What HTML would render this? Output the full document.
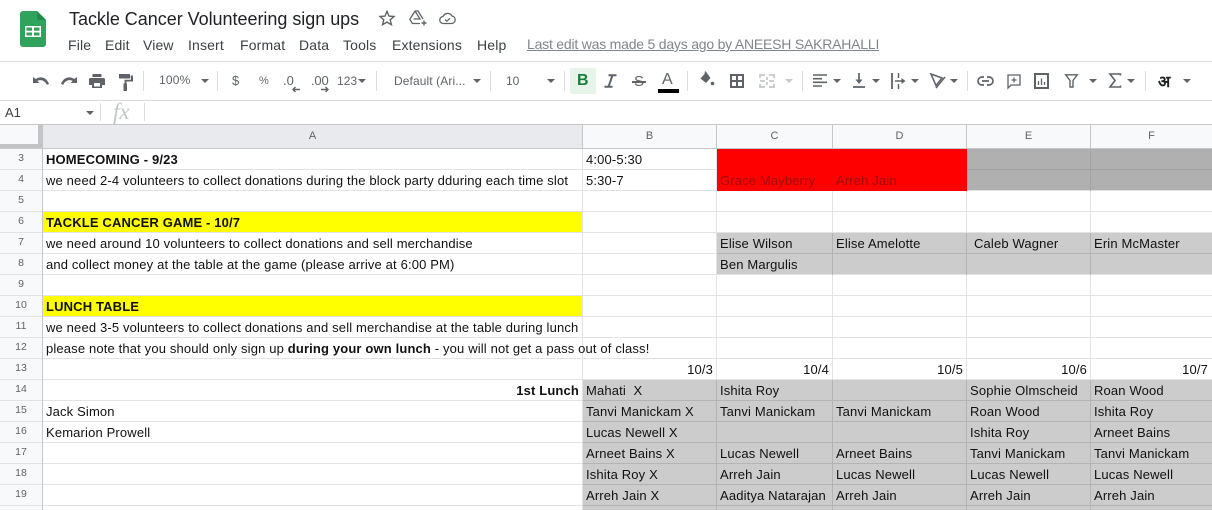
<!DOCTYPE html>
<html><head><meta charset="utf-8">
<style>
*{box-sizing:border-box}
html,body{margin:0;padding:0;background:#fff}
body{width:1212px;height:510px;overflow:hidden;position:relative;font-family:"Liberation Sans",Arial,sans-serif;color:#202124}
.a{position:absolute;white-space:nowrap}
.m{position:absolute;top:37px;font-size:14px;line-height:17px;color:#3c4043;letter-spacing:.15px}
.t{position:absolute;font-size:12px;line-height:14px;color:#5f6368;white-space:nowrap}
.dd{position:absolute;width:0;height:0;border-left:4px solid transparent;border-right:4px solid transparent;border-top:4px solid #5f6368}
.sep{position:absolute;top:71px;width:1px;height:20px;background:#dadce0}
.c{position:absolute;height:21px;line-height:21px;font-size:13px;color:#111;white-space:nowrap;overflow:visible;padding-left:3px;letter-spacing:.15px}
.r{padding:0 3px 0 0;text-align:right}
.fill{position:absolute}
.vl{position:absolute;width:1px;background:#e2e3e3;top:149px;height:361px}
.hl{position:absolute;height:1px;left:0;width:1212px;background:#e2e3e3}
.rn{position:absolute;left:0;width:42px;text-align:center;font-size:10.5px;line-height:21px;color:#5f6368}
.ch{position:absolute;top:125px;height:23px;background:#f8f9fa;border-right:1px solid #c7c7c7;text-align:center;font-size:11px;line-height:23px;color:#5f6368}
svg{position:absolute;overflow:visible}
</style></head><body>

<svg style="left:20px;top:11px" width="26" height="36" viewBox="0 0 26 36">
<path d="M3 0H17L26 9V33a3 3 0 0 1-3 3H3a3 3 0 0 1-3-3V3a3 3 0 0 1 3-3z" fill="#2fa35b"/>
<path d="M17 0L26 9H19a2 2 0 0 1-2-2z" fill="#1f8a4a"/>
<path d="M5 15H21V26H5zM6.500 16.500v3.200h5.500v-3.200zM14 16.500v3.200h5.500v-3.200zM6.500 21.500v3h5.500v-3zM14 21.500v3h5.500v-3z" fill="#fff" fill-rule="evenodd"/>
</svg>

<div class="a" style="left:69px;top:8px;font-size:18px;line-height:22px;color:#202124;letter-spacing:-.03px">Tackle Cancer Volunteering sign ups</div>
<svg style="left:379px;top:10px" width="16" height="16" viewBox="0 0 16 16"><path d="M8 1.500l2 4.600 5 .4-3.800 3.300 1.200 4.900L8 12.100l-4.400 2.600 1.200-4.900L1 6.500l5-.4z" fill="none" stroke="#5f6368" stroke-width="1.400"/></svg>
<svg style="left:409px;top:10px" width="19" height="16" viewBox="0 0 19 16"><path d="M6 1h3l5 8M6 1L.8 9.500 3.500 13.500H11M6 1l5 8H4.500" fill="none" stroke="#5f6368" stroke-width="1.300"/><path d="M15 10.500v5M12.500 13h5" stroke="#5f6368" stroke-width="1.400"/></svg>
<svg style="left:439px;top:12px" width="17" height="13" viewBox="0 0 17 13"><path d="M4.500 11.500a3.500 3.500 0 0 1-.5-7A5 5 0 0 1 13 4a3.800 3.800 0 0 1 0 7.500z" fill="none" stroke="#5f6368" stroke-width="1.300"/><path d="M6 7.500l2 1.700 3-3" fill="none" stroke="#5f6368" stroke-width="1.200"/></svg>

<div class="m" style="left:68px">File</div>
<div class="m" style="left:105px">Edit</div>
<div class="m" style="left:143px">View</div>
<div class="m" style="left:188px">Insert</div>
<div class="m" style="left:240px">Format</div>
<div class="m" style="left:299px">Data</div>
<div class="m" style="left:343px">Tools</div>
<div class="m" style="left:392px">Extensions</div>
<div class="m" style="left:477px">Help</div>
<div class="a" style="left:527px;top:36px;font-size:14px;line-height:17px;color:#80868b;text-decoration:underline;letter-spacing:-.21px">Last edit was made 5 days ago by ANEESH SAKRAHALLI</div>

<div class="fill" style="left:0;top:61px;width:1212px;height:1px;background:#dadce0"></div>
<div class="fill" style="left:0;top:100px;width:1212px;height:1px;background:#dadce0"></div>

<!-- toolbar -->
<svg style="left:33px;top:76px" width="16" height="10" viewBox="0 0 16 10"><path d="M0 1v6h6.500L4.300 5C7 3.300 11.500 3.800 13.800 8.800L16 8C13.800 1.500 7.500-.2 2.800 3z" fill="#5f6368"/></svg>
<svg style="left:61px;top:76px" width="16" height="10" viewBox="0 0 16 10"><path d="M16 1v6H9.500L11.700 5C9 3.300 4.500 3.800 2.200 8.800L0 8C2.200 1.500 8.500-.2 13.200 3z" fill="#5f6368"/></svg>
<svg style="left:89px;top:74px" width="16" height="14" viewBox="0 0 16 14"><path d="M3.500 0h9v3h-9zM1.500 4h13a1.500 1.500 0 0 1 1.500 1.500V11h-3v3H3v-3H0V5.500A1.500 1.500 0 0 1 1.500 4zM5 9v3.500h6V9z" fill="#5f6368" fill-rule="evenodd"/></svg>
<svg style="left:119px;top:74px" width="14" height="17" viewBox="0 0 14 17"><path d="M0 0h11v4.500H0zM11.500 1.500H14V7.500H7.500V9.500H8V17H4.500V9.500H5.500V5.800h6.500z" fill="#5f6368"/></svg>
<div class="sep" style="left:143px"></div>
<div class="t" style="left:159px;top:73px;letter-spacing:.2px">100%</div><div class="dd" style="left:201px;top:79px"></div>
<div class="sep" style="left:217px"></div>
<div class="t" style="left:232px;top:74px;font-size:13px">$</div>
<div class="t" style="left:259px;top:74px;font-size:11px">%</div>
<div class="t" style="left:283px;top:74px;font-size:13px">.0</div>
<svg style="left:292px;top:87px" width="8" height="5" viewBox="0 0 8 5"><path d="M8 2.500H2M3.500 0L1 2.500 3.500 5" fill="none" stroke="#5f6368" stroke-width="1.400"/></svg>
<div class="t" style="left:311px;top:74px;font-size:13px;letter-spacing:-.2px">.00</div>
<svg style="left:321px;top:87px" width="8" height="5" viewBox="0 0 8 5"><path d="M0 2.500H6M4.500 0L7 2.500 4.500 5" fill="none" stroke="#5f6368" stroke-width="1.400"/></svg>
<div class="t" style="left:337px;top:74px;letter-spacing:.1px">123</div><div class="dd" style="left:358px;top:79px"></div>
<div class="sep" style="left:376px"></div>
<div class="t" style="left:394px;top:74px;letter-spacing:.1px">Default (Ari...</div><div class="dd" style="left:473px;top:79px"></div>
<div class="sep" style="left:490px"></div>
<div class="t" style="left:506px;top:74px">10</div><div class="dd" style="left:547px;top:79px"></div>
<div class="sep" style="left:564px"></div>
<div class="fill" style="left:570px;top:68px;width:26px;height:26px;background:#e6f4ea;border-radius:2px"></div>
<div class="a" style="left:577px;top:72px;font-size:16px;line-height:18px;font-weight:bold;color:#188038">B</div>
<svg style="left:604px;top:74px" width="13" height="14" viewBox="0 0 13 14"><path d="M4.500 1.200H12.500M.5 12.800H8.500M8.500 1.200L4.500 12.800" fill="none" stroke="#5f6368" stroke-width="2"/></svg>
<div class="a" style="left:634px;top:73px;font-size:15px;line-height:17px;color:#5f6368">S</div>
<div class="fill" style="left:632px;top:81px;width:14px;height:1.500px;background:#5f6368"></div>
<div class="a" style="left:662px;top:71px;font-size:16px;line-height:18px;color:#5f6368">A</div>
<div class="fill" style="left:658px;top:89px;width:21px;height:4px;background:#000"></div>
<div class="sep" style="left:687px"></div>
<svg style="left:700px;top:71px" width="15" height="15" viewBox="0 0 15 15"><path d="M5 0l1.200 1L10.500 7 6 12 .5 7.500 4.500 3z" fill="#5f6368"/><circle cx="12.500" cy="12.500" r="1.800" fill="#5f6368"/></svg>
<svg style="left:730px;top:74px" width="14" height="14" viewBox="0 0 14 14"><path d="M1 1h12v12H1zM7 1v12M1 7h12" fill="none" stroke="#5f6368" stroke-width="2"/></svg>
<svg style="left:759px;top:74px" width="16" height="14" viewBox="0 0 16 14"><path d="M1 4V1h5M10 1h5v3M15 10v3h-5M6 13H1v-3M1 7h5M10 7h5M8 3v3M8 8v3" fill="none" stroke="#c6c8ca" stroke-width="1.800"/></svg>
<div class="dd" style="left:785px;top:79px;border-top-color:#c6c8ca"></div>
<div class="sep" style="left:802px"></div>
<svg style="left:813px;top:74px" width="14" height="13" viewBox="0 0 14 13"><path d="M0 1h14M0 4.700h9M0 8.300h14M0 12h9" stroke="#5f6368" stroke-width="1.600"/></svg>
<div class="dd" style="left:833px;top:79px"></div>
<svg style="left:853px;top:73px" width="12" height="15" viewBox="0 0 12 15"><path d="M0 14h12M6 0v8" fill="none" stroke="#5f6368" stroke-width="1.700"/><path d="M2.500 6.500h7L6 11z" fill="#5f6368"/></svg>
<div class="dd" style="left:872px;top:79px"></div>
<svg style="left:891px;top:73px" width="15" height="16" viewBox="0 0 15 16"><path d="M1 0v16" stroke="#5f6368" stroke-width="1.800"/><path d="M7.500 0v5M7.500 11v5M4 8h8" fill="none" stroke="#5f6368" stroke-width="1.500"/><path d="M10.500 5L14.500 8l-4 3z" fill="#5f6368"/></svg>
<div class="dd" style="left:911px;top:79px"></div>
<svg style="left:930px;top:73px" width="16" height="16" viewBox="0 0 16 16"><path d="M1 1l11 4-6 7.500z" fill="none" stroke="#5f6368" stroke-width="1.500"/><path d="M15 4L6 15" fill="none" stroke="#5f6368" stroke-width="1.500"/></svg>
<div class="dd" style="left:950px;top:79px"></div>
<div class="sep" style="left:967px"></div>
<svg style="left:977px;top:76px" width="17" height="10" viewBox="0 0 17 10"><path d="M7 1H5a4 4 0 0 0 0 8h2M10 1h2a4 4 0 0 1 0 8h-2M5 5h7" fill="none" stroke="#5f6368" stroke-width="1.700"/></svg>
<svg style="left:1007px;top:74px" width="14" height="15" viewBox="0 0 14 15"><path d="M1 1h12v10H4l-3 3zM7 3.500v5M4.500 6h5" fill="none" stroke="#5f6368" stroke-width="1.300"/></svg>
<svg style="left:1034px;top:73px" width="15" height="16" viewBox="0 0 15 16"><path d="M1 1h13v14H1z" fill="none" stroke="#5f6368" stroke-width="2"/><path d="M4.500 8v4M7.500 5.500V12M10.500 9v3" stroke="#5f6368" stroke-width="1.300"/></svg>
<svg style="left:1065px;top:74px" width="13" height="14" viewBox="0 0 13 14"><path d="M.7.800h11.600L8 6.500V13H5V6.500z" fill="none" stroke="#5f6368" stroke-width="1.400"/></svg>
<div class="dd" style="left:1089px;top:79px"></div>
<svg style="left:1109px;top:73px" width="12" height="15" viewBox="0 0 12 15"><path d="M11.500 2.500V1H1l5 6.500L1 14h10.500v-1.500" fill="none" stroke="#5f6368" stroke-width="1.600"/></svg>
<div class="dd" style="left:1127px;top:79px"></div>
<div class="sep" style="left:1145px"></div>
<div class="a" style="left:1158px;top:72px;font-family:'DejaVu Sans',sans-serif;font-size:16px;line-height:19px;font-weight:bold;color:#202124">अ</div>
<div class="dd" style="left:1183px;top:79px"></div>

<!-- formula bar -->
<div class="a" style="left:5px;top:105px;font-size:13px;line-height:15px;color:#3c4043">A1</div>
<div class="dd" style="left:86px;top:111px"></div>
<div class="fill" style="left:100px;top:103px;width:1px;height:18px;background:#dadce0"></div>
<div class="a" style="left:113px;top:100px;font-family:'Liberation Serif',serif;font-style:italic;font-size:23px;line-height:24px;color:#c4c7c9">fx</div>
<div class="fill" style="left:144px;top:103px;width:1px;height:18px;background:#dadce0"></div>
<div class="fill" style="left:0;top:124px;width:1212px;height:1px;background:#c7c7c7"></div>

<!-- headers -->
<div class="fill" style="left:0;top:125px;width:43px;height:385px;background:#f8f9fa"></div>
<div class="fill" style="left:0;top:144px;width:43px;height:4px;background:#c3c4c6"></div>
<div class="fill" style="left:38px;top:125px;width:5px;height:23px;background:#c3c4c6"></div>
<div class="ch" style="left:43px;width:540px;background:#e8eaed">A</div>
<div class="ch" style="left:583px;width:134px">B</div>
<div class="ch" style="left:717px;width:116px">C</div>
<div class="ch" style="left:833px;width:134px">D</div>
<div class="ch" style="left:967px;width:124px">E</div>
<div class="ch" style="left:1091px;width:121px;border-right:0">F</div>

<!-- fills -->
<div class="fill" style="left:967px;top:149px;width:245px;height:42px;background:#b0b0b0"></div>
<div class="fill" style="left:43px;top:212px;width:540px;height:21px;background:#ffff00"></div>
<div class="fill" style="left:43px;top:296px;width:540px;height:21px;background:#ffff00"></div>
<div class="fill" style="left:717px;top:233px;width:495px;height:42px;background:#cccccc"></div>
<div class="fill" style="left:583px;top:380px;width:629px;height:130px;background:#cccccc"></div>

<!-- grid -->
<div class="hl" style="top:148px;background:#c7c7c7"></div>
<div class="hl" style="top:169px"></div><div class="hl" style="top:190px"></div><div class="hl" style="top:211px"></div><div class="hl" style="top:232px"></div><div class="hl" style="top:253px"></div><div class="hl" style="top:274px"></div><div class="hl" style="top:295px"></div><div class="hl" style="top:316px"></div><div class="hl" style="top:337px"></div><div class="hl" style="top:358px"></div><div class="hl" style="top:379px"></div><div class="hl" style="top:400px"></div><div class="hl" style="top:421px"></div><div class="hl" style="top:442px"></div><div class="hl" style="top:463px"></div><div class="hl" style="top:484px"></div><div class="hl" style="top:505px"></div>
<div class="vl" style="left:42px;background:#c7c7c7"></div>
<div class="vl" style="left:582px"></div><div class="vl" style="left:716px"></div><div class="vl" style="left:832px"></div><div class="vl" style="left:966px"></div><div class="vl" style="left:1090px"></div>

<!-- yellow and red sit over grid lines -->
<div class="fill" style="left:43px;top:212px;width:539px;height:20px;background:#ffff00"></div>
<div class="fill" style="left:43px;top:296px;width:539px;height:20px;background:#ffff00"></div>
<div class="fill" style="left:717px;top:149px;width:250px;height:42px;background:#ff0000"></div>

<!-- darker lines over grey -->
<div class="fill" style="left:583px;top:400px;width:629px;height:1px;background:#b4b4b4"></div>
<div class="fill" style="left:583px;top:421px;width:629px;height:1px;background:#b4b4b4"></div>
<div class="fill" style="left:583px;top:442px;width:629px;height:1px;background:#b4b4b4"></div>
<div class="fill" style="left:583px;top:463px;width:629px;height:1px;background:#b4b4b4"></div>
<div class="fill" style="left:583px;top:484px;width:629px;height:1px;background:#b4b4b4"></div>
<div class="fill" style="left:583px;top:505px;width:629px;height:1px;background:#b4b4b4"></div>
<div class="fill" style="left:716px;top:380px;width:1px;height:130px;background:#b4b4b4"></div>
<div class="fill" style="left:832px;top:380px;width:1px;height:130px;background:#b4b4b4"></div>
<div class="fill" style="left:966px;top:380px;width:1px;height:130px;background:#b4b4b4"></div>
<div class="fill" style="left:1090px;top:380px;width:1px;height:130px;background:#b4b4b4"></div>
<div class="fill" style="left:717px;top:253px;width:495px;height:1px;background:#b4b4b4"></div>
<div class="fill" style="left:832px;top:233px;width:1px;height:42px;background:#b4b4b4"></div>
<div class="fill" style="left:966px;top:233px;width:1px;height:42px;background:#b4b4b4"></div>
<div class="fill" style="left:1090px;top:233px;width:1px;height:42px;background:#b4b4b4"></div>
<div class="fill" style="left:967px;top:169px;width:245px;height:1px;background:#a2a2a2"></div>
<div class="fill" style="left:1090px;top:149px;width:1px;height:42px;background:#a2a2a2"></div>

<!-- row numbers -->
<div class="rn" style="top:148px">3</div><div class="rn" style="top:169px">4</div><div class="rn" style="top:190px">5</div><div class="rn" style="top:211px">6</div><div class="rn" style="top:232px">7</div><div class="rn" style="top:253px">8</div><div class="rn" style="top:274px">9</div><div class="rn" style="top:295px">10</div><div class="rn" style="top:316px">11</div><div class="rn" style="top:337px">12</div><div class="rn" style="top:358px">13</div><div class="rn" style="top:379px">14</div><div class="rn" style="top:400px">15</div><div class="rn" style="top:421px">16</div><div class="rn" style="top:442px">17</div><div class="rn" style="top:463px">18</div><div class="rn" style="top:484px">19</div>

<!-- cells -->
<div class="c" style="left:43px;top:149px"><b>HOMECOMING - 9/23</b></div>
<div class="c" style="left:583px;top:149px">4:00-5:30</div>
<div class="c" style="left:43px;top:170px">we need 2-4 volunteers to collect donations during the block party dduring each time slot</div>
<div class="c" style="left:583px;top:170px">5:30-7</div>
<div class="c" style="left:717px;top:170px;color:#a10b0b">Grace Mayberry</div>
<div class="c" style="left:833px;top:170px;color:#a10b0b">Arreh Jain</div>
<div class="c" style="left:43px;top:212px"><b>TACKLE CANCER GAME - 10/7</b></div>
<div class="c" style="left:43px;top:233px">we need around 10 volunteers to collect donations and sell merchandise</div>
<div class="c" style="left:717px;top:233px">Elise Wilson</div>
<div class="c" style="left:833px;top:233px">Elise Amelotte</div>
<div class="c" style="left:971px;top:233px">Caleb Wagner</div>
<div class="c" style="left:1091px;top:233px">Erin McMaster</div>
<div class="c" style="left:43px;top:254px">and collect money at the table at the game (please arrive at 6:00 PM)</div>
<div class="c" style="left:717px;top:254px">Ben Margulis</div>
<div class="c" style="left:43px;top:296px"><b>LUNCH TABLE</b></div>
<div class="c" style="left:43px;top:317px">we need 3-5 volunteers to collect donations and sell merchandise at the table during lunch</div>
<div class="c" style="left:43px;top:338px">please note that you should only sign up <b>during your own lunch</b> - you will not get a pass out of class!</div>
<div class="c r" style="left:583px;width:133px;top:359px">10/3</div>
<div class="c r" style="left:717px;width:115px;top:359px">10/4</div>
<div class="c r" style="left:833px;width:133px;top:359px">10/5</div>
<div class="c r" style="left:967px;width:123px;top:359px">10/6</div>
<div class="c r" style="left:1091px;width:120px;top:359px">10/7</div>
<div class="c r" style="left:43px;width:539px;top:380px"><b>1st Lunch</b></div>
<div class="c" style="left:583px;top:380px">Mahati&nbsp; X</div>
<div class="c" style="left:717px;top:380px">Ishita Roy</div>
<div class="c" style="left:967px;top:380px">Sophie Olmscheid</div>
<div class="c" style="left:1091px;top:380px">Roan Wood</div>
<div class="c" style="left:43px;top:401px">Jack Simon</div>
<div class="c" style="left:583px;top:401px">Tanvi Manickam X</div>
<div class="c" style="left:717px;top:401px">Tanvi Manickam</div>
<div class="c" style="left:833px;top:401px">Tanvi Manickam</div>
<div class="c" style="left:967px;top:401px">Roan Wood</div>
<div class="c" style="left:1091px;top:401px">Ishita Roy</div>
<div class="c" style="left:43px;top:422px">Kemarion Prowell</div>
<div class="c" style="left:583px;top:422px">Lucas Newell X</div>
<div class="c" style="left:967px;top:422px">Ishita Roy</div>
<div class="c" style="left:1091px;top:422px">Arneet Bains</div>
<div class="c" style="left:583px;top:443px">Arneet Bains X</div>
<div class="c" style="left:717px;top:443px">Lucas Newell</div>
<div class="c" style="left:833px;top:443px">Arneet Bains</div>
<div class="c" style="left:967px;top:443px">Tanvi Manickam</div>
<div class="c" style="left:1091px;top:443px">Tanvi Manickam</div>
<div class="c" style="left:583px;top:464px">Ishita Roy X</div>
<div class="c" style="left:717px;top:464px">Arreh Jain</div>
<div class="c" style="left:833px;top:464px">Lucas Newell</div>
<div class="c" style="left:967px;top:464px">Lucas Newell</div>
<div class="c" style="left:1091px;top:464px">Lucas Newell</div>
<div class="c" style="left:583px;top:485px">Arreh Jain X</div>
<div class="c" style="left:717px;top:485px">Aaditya Natarajan</div>
<div class="c" style="left:833px;top:485px">Arreh Jain</div>
<div class="c" style="left:967px;top:485px">Arreh Jain</div>
<div class="c" style="left:1091px;top:485px">Arreh Jain</div>
</body></html>
